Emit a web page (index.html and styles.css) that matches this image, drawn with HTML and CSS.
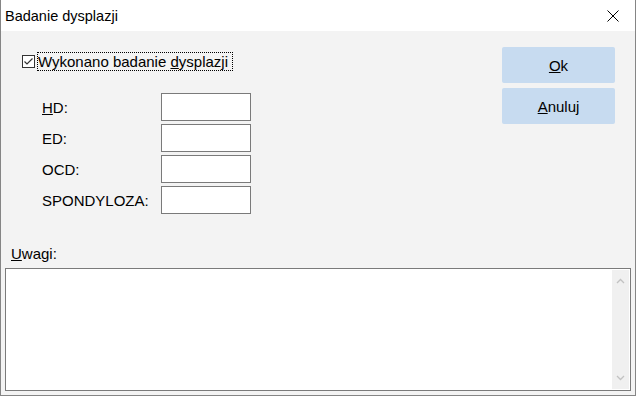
FILE: index.html
```html
<!DOCTYPE html>
<html lang="pl">
<head>
    <meta charset="UTF-8">
    <meta name="viewport" content="width=device-width, initial-scale=1.0">
    <title>Badanie dysplazji</title>
    <link rel="stylesheet" href="styles.css">
</head>
<body>

    <div class="window">
        <!-- Title bar -->
        <div class="titlebar">
            <span class="title">Badanie dysplazji</span>
            <svg class="close" width="12" height="12" viewBox="0 0 12 12">
                <path d="M0.5 0.5 L11.5 11.5 M11.5 0.5 L0.5 11.5" stroke="#000" stroke-width="1" fill="none"/>
            </svg>
        </div>

        <div class="content">
            <div class="top">
                <!-- Checkbox and fields -->
                <div class="options">
                    <label class="check-row">
                        <svg class="check-box" width="13" height="13" viewBox="0 0 13 13">
                            <rect x="0.5" y="0.5" width="12" height="12" fill="#fff" stroke="#333"/>
                            <path d="M2.5 6.5 L5 9 L10.5 3.5" stroke="#333" stroke-width="1.2" fill="none"/>
                        </svg>
                        <span class="check-label">Wykonano badanie <u>d</u>ysplazji</span>
                    </label>

                    <div class="fields">
                        <span class="field-label"><u>H</u>D:</span>
                        <input class="field-input" type="text">
                        <span class="field-label">ED:</span>
                        <input class="field-input" type="text">
                        <span class="field-label">OCD:</span>
                        <input class="field-input" type="text">
                        <span class="field-label">SPONDYLOZA:</span>
                        <input class="field-input" type="text">
                    </div>
                </div>

                <!-- Ok / Anuluj -->
                <div class="actions">
                    <button class="btn"><u>O</u>k</button>
                    <button class="btn"><u>A</u>nuluj</button>
                </div>
            </div>

            <!-- Uwagi -->
            <div class="notes-label"><u>U</u>wagi:</div>
            <div class="notes-box">
                <textarea class="notes-input"></textarea>
                <div class="scrollbar">
                    <svg width="9" height="6" viewBox="0 0 9 6">
                        <path d="M1 5 L4.5 1.5 L8 5" stroke="#c2c2c2" stroke-width="1.3" fill="none"/>
                    </svg>
                    <svg width="9" height="6" viewBox="0 0 9 6">
                        <path d="M1 1 L4.5 4.5 L8 1" stroke="#c2c2c2" stroke-width="1.3" fill="none"/>
                    </svg>
                </div>
            </div>
        </div>
    </div>

</body>
</html>
```

FILE: styles.css
```css
body {
    margin: 0;
    background-color: #f3f3f3;
    font-family: "Liberation Sans", Arial, sans-serif;
    font-size: 15px;
    color: #000;
}

.window {
    width: 636px;
    height: 396px;
    box-sizing: border-box;
    border: 1px solid #858585;
    border-top: none;
    display: flex;
    flex-direction: column;
    background-color: #f3f3f3;
}

.titlebar {
    height: 31px;
    flex-shrink: 0;
    background-color: #fff;
    display: flex;
    align-items: center;
    justify-content: space-between;
    padding: 0 16px 0 4px;
}

.title {
    font-size: 14.5px;
}

.close {
    display: block;
}

.content {
    flex: 1;
    display: flex;
    flex-direction: column;
    padding: 0 4px 4px 4px;
}

.top {
    display: flex;
    justify-content: space-between;
    align-items: flex-start;
}

.options {
    margin: 21px 0 0 17px;
}

.check-row {
    display: flex;
    align-items: center;
    height: 19px;
}

.check-box {
    display: block;
    margin-right: 2px;
}

.check-label {
    border: 1px dotted #000;
    padding: 0 4px 0 0;
    line-height: 17px;
}

.fields {
    margin: 22px 0 0 20px;
    display: grid;
    grid-template-columns: 119px 90px;
    grid-auto-rows: 28px;
    row-gap: 3px;
    align-items: center;
}

.field-input {
    width: 90px;
    height: 28px;
    box-sizing: border-box;
    border: 1px solid #7a7a7a;
    background-color: #fff;
    margin: 0;
    padding: 0 3px;
    font: inherit;
}

.actions {
    margin: 16px 16px 0 0;
    display: flex;
    flex-direction: column;
    gap: 5px;
}

.btn {
    width: 113px;
    height: 36px;
    border: none;
    border-radius: 2px;
    background-color: #c7dbf0;
    font: inherit;
    color: #000;
    padding: 0;
}

.notes-label {
    margin-top: 31px;
    padding-left: 6px;
    line-height: 18px;
}

.notes-box {
    flex: 1;
    margin-top: 5px;
    display: flex;
    border: 1px solid #7a7a7a;
    background-color: #fff;
    padding: 1px;
}

.notes-input {
    flex: 1;
    border: none;
    resize: none;
    outline: none;
    font: inherit;
    padding: 2px 4px;
    margin: 0;
}

.scrollbar {
    width: 17px;
    background-color: #f0f0f0;
    display: flex;
    flex-direction: column;
    justify-content: space-between;
    align-items: center;
    padding: 8px 0 8px 0;
}

.scrollbar svg {
    display: block;
}
```
